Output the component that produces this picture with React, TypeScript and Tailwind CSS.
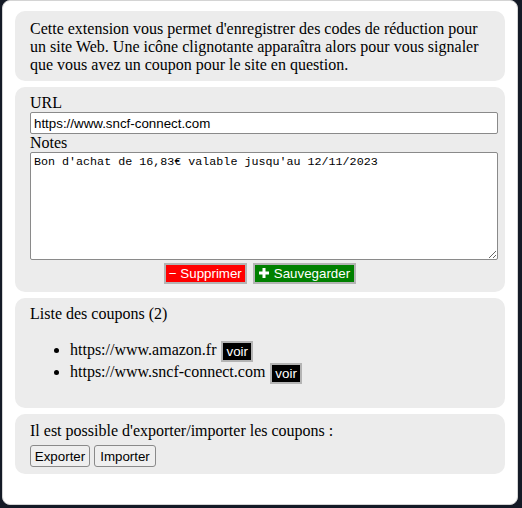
import React, { useState } from 'react'

type Coupon = {
  url: string
  notes: string
}

const coupons: Coupon[] = [
  { url: 'https://www.amazon.fr', notes: '' },
  {
    url: 'https://www.sncf-connect.com',
    notes: "Bon d'achat de 16,83€ valable jusqu'au 12/11/2023"
  }
]

const PlusIcon = () => (
  <svg width="10" height="10" viewBox="0 0 10 10" className="inline-block mr-[5px] -mt-[2px]">
    <rect x="3.5" y="0" width="3" height="10" fill="white" />
    <rect x="0" y="3.5" width="10" height="3" fill="white" />
  </svg>
)

const Box = ({ children, className = '' }: { children: React.ReactNode; className?: string }) => (
  <section className={`bg-[#ececec] rounded-[10px] pl-[15px] ${className}`}>{children}</section>
)

export default function App() {
  const [url, setUrl] = useState('https://www.sncf-connect.com')
  const [notes, setNotes] = useState(coupons[1].notes)

  return (
    <div
      className="w-[522px] h-[508px] bg-[#141a26] overflow-hidden leading-[normal]"
      style={{ fontFamily: '"Liberation Serif", "Times New Roman", serif' }}
    >
      <div className="ml-[2px] w-[516px] h-[505px] bg-white border border-[#d4d4d4] rounded-[8px] px-[12px] pt-[10px] flex flex-col gap-[6px] text-[16px] text-black">
        <Box className="pr-[15px] pt-[9px] pb-[7px]">
          Cette extension vous permet d'enregistrer des codes de réduction pour un site Web. Une
          icône clignotante apparaîtra alors pour vous signaler que vous avez un coupon pour le
          site en question.
        </Box>

        <Box className="pr-[7px] pt-[7px] pb-[8px] flex flex-col">
          <label htmlFor="url">URL</label>
          <input
            id="url"
            value={url}
            onChange={e => setUrl(e.target.value)}
            className="h-[22px] w-full border border-[#8a8a8a] rounded-[2px] bg-white px-[3px] text-[13.33px] outline-none"
            style={{ fontFamily: '"Liberation Sans", Arial, sans-serif' }}
          />
          <label htmlFor="notes">Notes</label>
          <textarea
            id="notes"
            value={notes}
            onChange={e => setNotes(e.target.value)}
            className="h-[108px] w-full border border-[#8a8a8a] rounded-[2px] bg-white px-[3px] py-[2px] text-[11.7px] outline-none"
            style={{ fontFamily: '"Liberation Mono", "Courier New", monospace' }}
          />
          <div
            className="flex justify-center gap-[6px] mt-[3px] pr-[8px] text-[13.33px]"
            style={{ fontFamily: '"Liberation Sans", Arial, sans-serif' }}
          >
            <button className="h-[21px] bg-[#ff0000] text-white border-2 border-[#b4b4b4] px-[3px] leading-none">
              − Supprimer
            </button>
            <button className="h-[21px] bg-[#008000] text-white border-2 border-[#b4b4b4] px-[4px] leading-none">
              <PlusIcon />
              Sauvegarder
            </button>
          </div>
        </Box>

        <Box className="pr-[15px] pt-[7px] pb-[9px]">
          <div>Liste des coupons ({coupons.length})</div>
          <ul className="list-disc pl-[40px] my-[16px]">
            {coupons.map(c => (
              <li key={c.url} className="h-[22px] leading-[22px]">
                {c.url}{' '}
                <button
                  className="h-[21px] bg-black text-white border-2 border-[#b4b4b4] px-[3px] text-[13.33px] leading-none align-middle ml-[1px]"
                  style={{ fontFamily: '"Liberation Sans", Arial, sans-serif' }}
                >
                  voir
                </button>
              </li>
            ))}
          </ul>
        </Box>

        <Box className="pr-[15px] pt-[8px] pb-[7px]">
          <div>Il est possible d'exporter/importer les coupons :</div>
          <div
            className="flex gap-[4px] mt-[5px] text-[13.33px]"
            style={{ fontFamily: '"Liberation Sans", Arial, sans-serif' }}
          >
            <button className="h-[22px] w-[60px] bg-[#efefef] border border-[#8a8a8a] rounded-[3px]">
              Exporter
            </button>
            <button className="h-[22px] w-[62px] bg-[#efefef] border border-[#8a8a8a] rounded-[3px]">
              Importer
            </button>
          </div>
        </Box>
      </div>
    </div>
  )
}
